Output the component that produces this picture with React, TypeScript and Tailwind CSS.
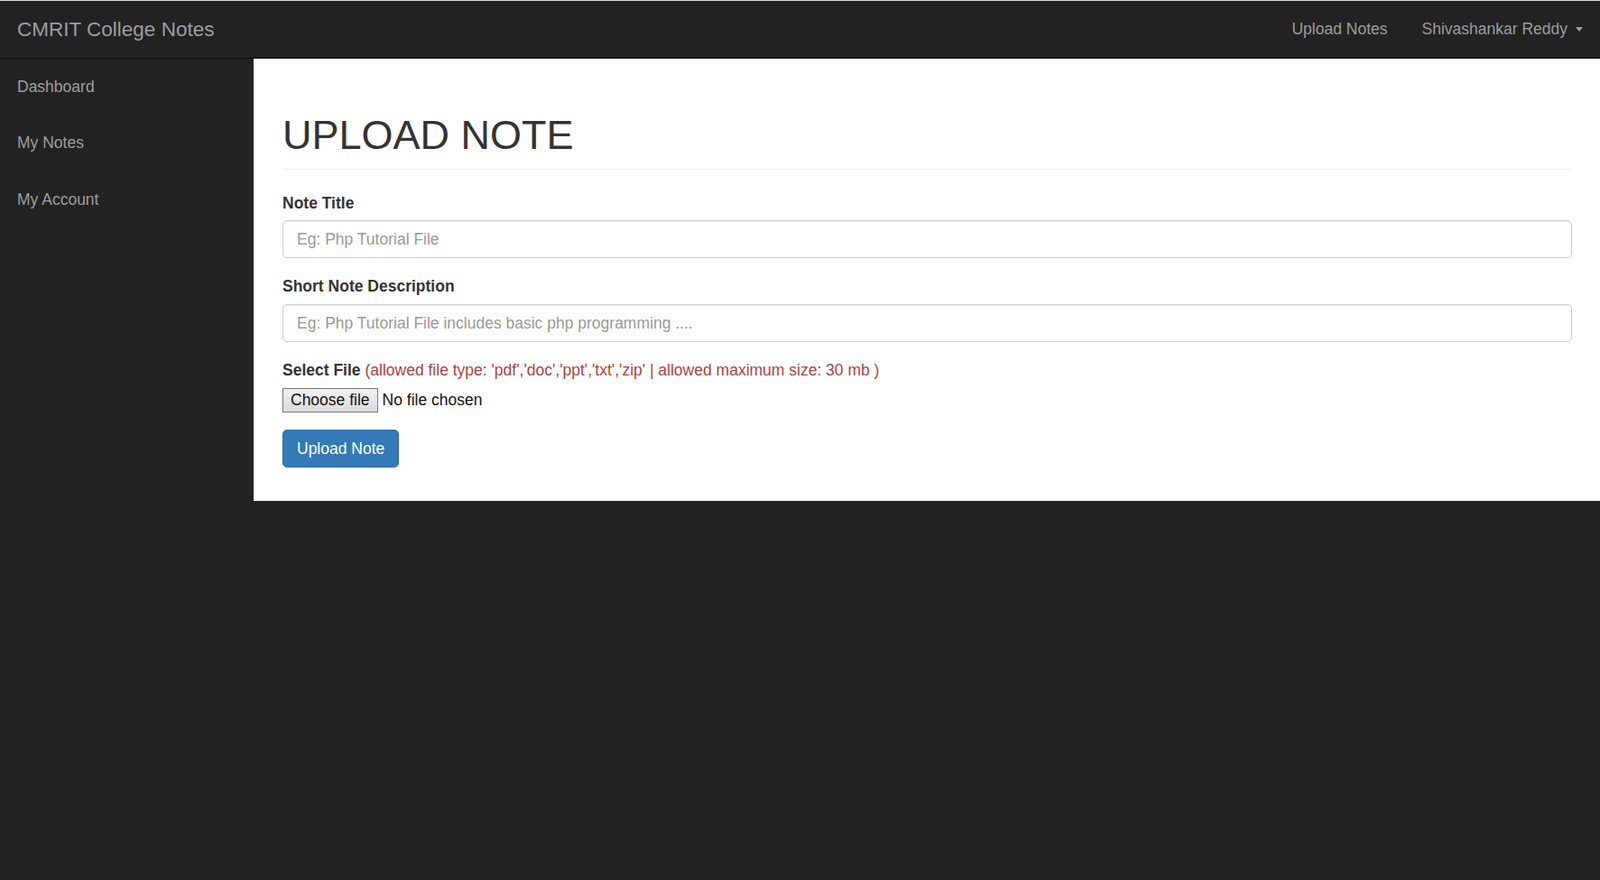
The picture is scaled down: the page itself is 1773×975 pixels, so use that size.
import { useState } from 'react';

const sideLinks = ['Dashboard', 'My Notes', 'My Account'];

export default function App() {
    const [title, setTitle] = useState('');
    const [desc, setDesc] = useState('');

    return (
        <div className="h-[975px] bg-[#222] font-['Liberation_Sans',Arial,sans-serif] text-[17.5px] leading-[25px] text-[#333]">
            <div className="h-px bg-[#d5dce4]" />

            {/* Top navbar */}
            <nav className="flex h-[64px] items-center justify-between border-b border-[#080808] bg-[#222]">
                <a href="#" className="px-[19px] text-[22.5px] leading-[25px] text-[#9d9d9d]">
                    CMRIT College Notes
                </a>
                <ul className="flex items-center">
                    <li>
                        <a href="#" className="block px-[19px] text-[#9d9d9d]">
                            Upload Notes
                        </a>
                    </li>
                    <li>
                        <a href="#" className="flex items-center px-[19px] text-[#9d9d9d]">
                            Shivashankar Reddy
                            <span className="ml-[9px] inline-block h-0 w-0 border-x-[4px] border-t-[5px] border-x-transparent border-t-[#9d9d9d]" />
                        </a>
                    </li>
                </ul>
            </nav>

            <div className="flex">
                {/* Sidebar */}
                <aside className="w-[281px] shrink-0">
                    <ul>
                        {sideLinks.map((link) => (
                            <li key={link}>
                                <a href="#" className="flex h-[62.5px] items-center px-[19px] text-[#9d9d9d]">
                                    {link}
                                </a>
                            </li>
                        ))}
                    </ul>
                </aside>

                {/* Main */}
                <main className="flex-1 self-start bg-white pl-[32px] pr-[31px] pt-[60px] pb-[37px]">
                    <div className="mb-[25px] border-b border-[#eee] pb-[12px]">
                        <h1 className="text-[45px] leading-[50px] font-normal text-[#333]">UPLOAD NOTE</h1>
                    </div>

                    <form onSubmit={(e) => e.preventDefault()}>
                        <div className="mb-[19px]">
                            <label className="mb-[6px] block font-bold">Note Title</label>
                            <input
                                type="text"
                                value={title}
                                onChange={(e) => setTitle(e.target.value)}
                                placeholder="Eg: Php Tutorial File"
                                className="block h-[42px] w-full rounded-[5px] border border-[#ccc] px-[15px] text-[17.5px] text-[#555] shadow-[inset_0_1px_1px_rgba(0,0,0,0.075)] outline-none placeholder:text-[#999]"
                            />
                        </div>

                        <div className="mb-[19px]">
                            <label className="mb-[7px] block font-bold">Short Note Description</label>
                            <input
                                type="text"
                                value={desc}
                                onChange={(e) => setDesc(e.target.value)}
                                placeholder="Eg: Php Tutorial File includes basic php programming ...."
                                className="block h-[42px] w-full rounded-[5px] border border-[#ccc] px-[15px] text-[17.5px] text-[#555] shadow-[inset_0_1px_1px_rgba(0,0,0,0.075)] outline-none placeholder:text-[#999]"
                            />
                        </div>

                        <div className="mb-[19px]">
                            <label className="mb-[7px] block">
                                <span className="font-bold">Select File</span>{' '}
                                <span className="text-[#a94442]">
                                    (allowed file type: 'pdf','doc','ppt','txt','zip' | allowed maximum size: 30 mb )
                                </span>
                            </label>
                            <div className="flex h-[27px] items-center text-[17.5px] text-[#111]">
                                <span className="flex h-[27px] items-center border border-[#767676] bg-gradient-to-b from-[#f2f2f2] to-[#dcdcdc] px-[8px] leading-none">
                                    Choose file
                                </span>
                                <span className="ml-[5px]">No file chosen</span>
                            </div>
                        </div>

                        <button
                            type="submit"
                            className="h-[42px] rounded-[5px] border border-[#2e6da4] bg-[#337ab7] px-[15px] text-[17.5px] text-white"
                        >
                            Upload Note
                        </button>
                    </form>
                </main>
            </div>
        </div>
    );
}
